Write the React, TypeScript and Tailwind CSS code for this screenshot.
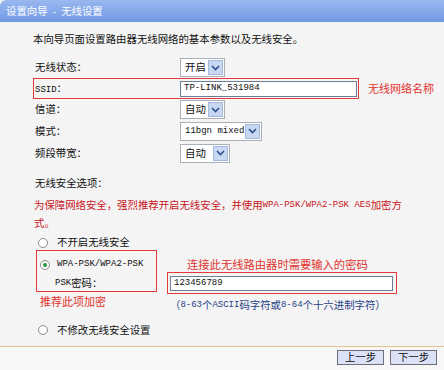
import React from 'react';

const Mono = ({ children }: { children: React.ReactNode }) => (
  <span className="font-['Liberation_Mono',monospace] text-[9px]">{children}</span>
);

const Chevron = () => (
  <svg width="9" height="6" viewBox="0 0 9 6">
    <polyline points="1,1 4.5,4.5 8,1" fill="none" stroke="#2c4f8f" strokeWidth="1.6" />
  </svg>
);

const Select = ({ value, w, mono }: { value: string; w: string; mono?: boolean }) => (
  <div className={`flex h-[19px] border border-[#a9b0b8] bg-white ${w}`}>
    <div className="flex-1 flex items-center pl-[4px]">{mono ? <Mono>{value}</Mono> : value}</div>
    <div className="w-[15px] my-[1px] mr-[1px] bg-[#c8d8f3] border border-[#a3b8dc] flex items-center justify-center">
      <Chevron />
    </div>
  </div>
);

const Radio = ({ checked }: { checked?: boolean }) => (
  <div className="w-[10px] h-[10px] rounded-full border border-[#8d8d8d] bg-white flex items-center justify-center">
    {checked && <div className="w-[4px] h-[4px] rounded-full bg-[#2e9a3a]" />}
  </div>
);

const Row = ({ label, children, h = 'h-[21px]' }: { label: string; children: React.ReactNode; h?: string }) => (
  <div className={`flex items-center ${h}`}>
    <div className="w-[147px] pl-[2px]">{label}</div>
    {children}
  </div>
);

const App = () => {
  return (
    <div className="w-[444px] h-[370px] bg-[#f4f4f4] flex flex-col font-['Noto_Sans_CJK_SC',sans-serif] text-[10.4px] text-[#111] leading-none overflow-hidden">
      <div className="h-[22px] shrink-0 rounded-tl-[6px] bg-gradient-to-b from-[#9ab8f0] to-[#7299e4] text-white flex items-center pl-[6px] gap-[5px]">
        <span>设置向导</span>
        <span>-</span>
        <span>无线设置</span>
      </div>

      <div className="h-[324px] shrink-0 pl-[33px] flex flex-col">
        <div className="h-[12px] mt-[11px] flex items-center">本向导页面设置路由器无线网络的基本参数以及无线安全。</div>

        <div className="mt-[12px]">
          <Row label="无线状态：">
            <Select value="开启" w="w-[45px]" />
          </Row>
        </div>

        <div className="flex items-center h-[21px]">
          <div className="w-[326px] h-[21px] border border-[#e23a3a] flex items-center">
            <div className="w-[146px] pl-[1px]">
              <Mono>SSID</Mono>：
            </div>
            <div className="w-[177px] h-[16px] border border-[#6c7f99] bg-white flex items-center pl-[3px]">
              <Mono>TP-LINK_531984</Mono>
            </div>
          </div>
          <div className="ml-[9px] text-[#e0332c] text-[11px]">无线网络名称</div>
        </div>

        <Row label="信道：">
          <Select value="自动" w="w-[45px]" />
        </Row>
        <Row label="模式：" h="h-[22px]">
          <Select value="11bgn mixed" w="w-[82px]" mono />
        </Row>
        <Row label="频段带宽：" h="h-[22px]">
          <Select value="自动" w="w-[50px]" />
        </Row>

        <div className="h-[18px] mt-[10px] flex items-center pl-[2px]">无线安全选项：</div>
        <div className="h-[18px] mt-[4px] flex items-center text-[#c8161d] pl-[1px]">
          为保障网络安全，强烈推荐开启无线安全，并使用<Mono>WPA-PSK/WPA2-PSK AES</Mono>加密方
        </div>
        <div className="h-[18px] flex items-center text-[#c8161d] pl-[1px]">式。</div>

        <div className="h-[15px] mt-[3px] flex items-center pl-[5px] gap-[9px]">
          <Radio />
          <span>不开启无线安全</span>
        </div>

        <div className="flex">
          <div className="flex flex-col ml-[3px]">
            <div className="w-[121px] h-[42px] border border-[#e23a3a] flex flex-col">
              <div className="h-[24px] pt-[3px] flex items-center pl-[3px] gap-[7px]">
                <Radio checked />
                <Mono>WPA-PSK/WPA2-PSK</Mono>
              </div>
              <div className="h-[16px] flex items-center pl-[18px]">
                <Mono>PSK</Mono>密码：
              </div>
            </div>
            <div className="h-[18px] flex items-center pl-[4px] text-[#e0332c] text-[11px]">推荐此项加密</div>
          </div>
          <div className="flex flex-col ml-[10px]">
            <div className="h-[14px] mt-[8px] flex items-center pl-[20px] text-[#e0332c] text-[11.3px]">
              连接此无线路由器时需要输入的密码
            </div>
            <div className="w-[230px] h-[22px] border border-[#e23a3a] flex items-center pl-[2px]">
              <div className="w-[223px] h-[15px] border border-[#6c7f99] bg-white flex items-center pl-[3px]">
                <Mono>123456789</Mono>
              </div>
            </div>
            <div className="h-[14px] mt-[4px] flex items-center pl-[3px] text-[#243f86]">
              （<Mono>8-63</Mono>个<Mono>ASCII</Mono>码字符或<Mono>8-64</Mono>个十六进制字符）
            </div>
          </div>
        </div>

        <div className="h-[16px] mt-[10px] flex items-center pl-[5px] gap-[9px]">
          <Radio />
          <span>不修改无线安全设置</span>
        </div>
      </div>

      <div className="border-t border-[#e3c48c] flex-1 bg-[#f7f7f7] flex justify-end items-start pt-[3px] pr-[7px] gap-[6px]">
        <button className="w-[47px] h-[15px] border border-[#6f6f7a] bg-[#dbe2f7] flex items-center justify-center text-[10.4px]">
          上一步
        </button>
        <button className="w-[47px] h-[15px] border border-[#6f6f7a] bg-[#dbe2f7] flex items-center justify-center text-[10.4px]">
          下一步
        </button>
      </div>
    </div>
  );
};

export default App;
